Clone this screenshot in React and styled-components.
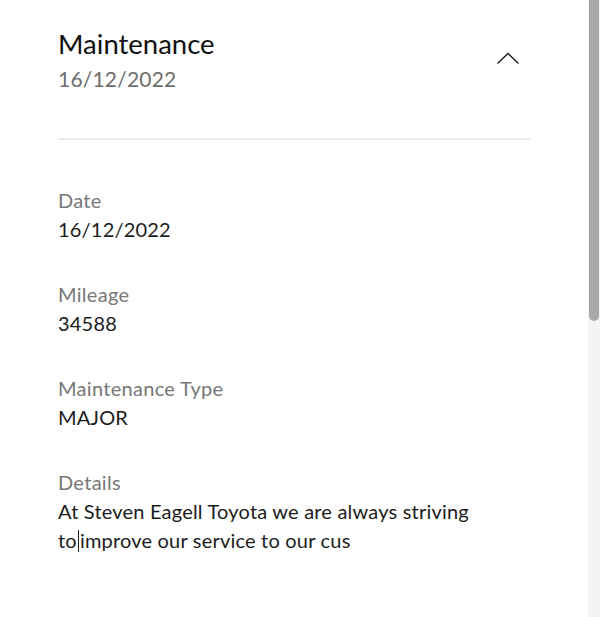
import React from 'react';
import styled, { createGlobalStyle } from 'styled-components';

const GlobalStyle = createGlobalStyle`
  html, body {
    margin: 0;
    padding: 0;
    background: #fff;
    font-family: Lato, "Noto Sans", sans-serif;
    -webkit-font-smoothing: antialiased;
  }
`;

const Page = styled.div`
  display: flex;
  width: 600px;
  height: 617px;
  overflow: hidden;
  background: #fff;
`;

const Panel = styled.main`
  flex: 1;
  padding: 0 58px 0 58px;
`;

const Header = styled.header`
  display: flex;
  justify-content: space-between;
  align-items: flex-start;
  padding: 28px 0 43px;
  border-bottom: 2px solid #ebebeb;
`;

const TitleBlock = styled.div`
  display: flex;
  flex-direction: column;
  gap: 3px;
`;

const Title = styled.h1`
  margin: 0;
  font-size: 27.5px;
  font-weight: 400;
  line-height: 32px;
  color: #111;
`;

const Subtitle = styled.div`
  font-size: 21px;
  line-height: 32px;
  letter-spacing: 0.2px;
  color: #6e6e6e;
`;

const Toggle = styled.button`
  display: flex;
  align-items: center;
  justify-content: center;
  width: 24px;
  height: 24px;
  margin: 18px 10px 0 0;
  padding: 0;
  border: 0;
  background: none;
  color: #1a1a1a;
  cursor: pointer;
`;

const Fields = styled.dl`
  display: flex;
  flex-direction: column;
  gap: 36px;
  margin: 0;
  padding-top: 46px;
`;

const Field = styled.div`
  display: flex;
  flex-direction: column;
`;

const Label = styled.dt`
  font-size: 20px;
  line-height: 29px;
  letter-spacing: 0.3px;
  color: #777;
`;

const Value = styled.dd`
  margin: 0;
  font-size: 20px;
  line-height: 29px;
  letter-spacing: 0.2px;
  color: #1c1c1c;
`;

const Caret = styled.span`
  display: inline-block;
  width: 1px;
  height: 22px;
  margin: 0 1px;
  vertical-align: -4px;
  background: #1c1c1c;
`;

const ScrollTrack = styled.div`
  width: 12px;
  height: 100%;
  background: #f4f4f4;
  display: flex;
  justify-content: center;
`;

const ScrollThumb = styled.div`
  width: 10px;
  height: 321px;
  background: #a9a9a9;
  border-radius: 0 0 5px 5px;
`;

const ChevronUp = () => (
  <svg width="24" height="24" viewBox="0 0 24 24" fill="none" stroke="currentColor" strokeWidth="1.3">
    <path d="M1.5 17.5 L12 7.5 L22.5 17.5" />
  </svg>
);

const fields = [
  { label: 'Date', value: '16/12/2022' },
  { label: 'Mileage', value: '34588' },
  { label: 'Maintenance Type', value: 'MAJOR' },
];

export default function App() {
  return (
    <>
      <GlobalStyle />
      <Page>
        <Panel>
          <Header>
            <TitleBlock>
              <Title>Maintenance</Title>
              <Subtitle>16/12/2022</Subtitle>
            </TitleBlock>
            <Toggle aria-label="Collapse">
              <ChevronUp />
            </Toggle>
          </Header>
          <Fields>
            {fields.map((f) => (
              <Field key={f.label}>
                <Label>{f.label}</Label>
                <Value>{f.value}</Value>
              </Field>
            ))}
            <Field>
              <Label>Details</Label>
              <Value>
                At Steven Eagell Toyota we are always striving
                <br />
                to<Caret />improve our service to our cus
              </Value>
            </Field>
          </Fields>
        </Panel>
        <ScrollTrack>
          <ScrollThumb />
        </ScrollTrack>
      </Page>
    </>
  );
}
